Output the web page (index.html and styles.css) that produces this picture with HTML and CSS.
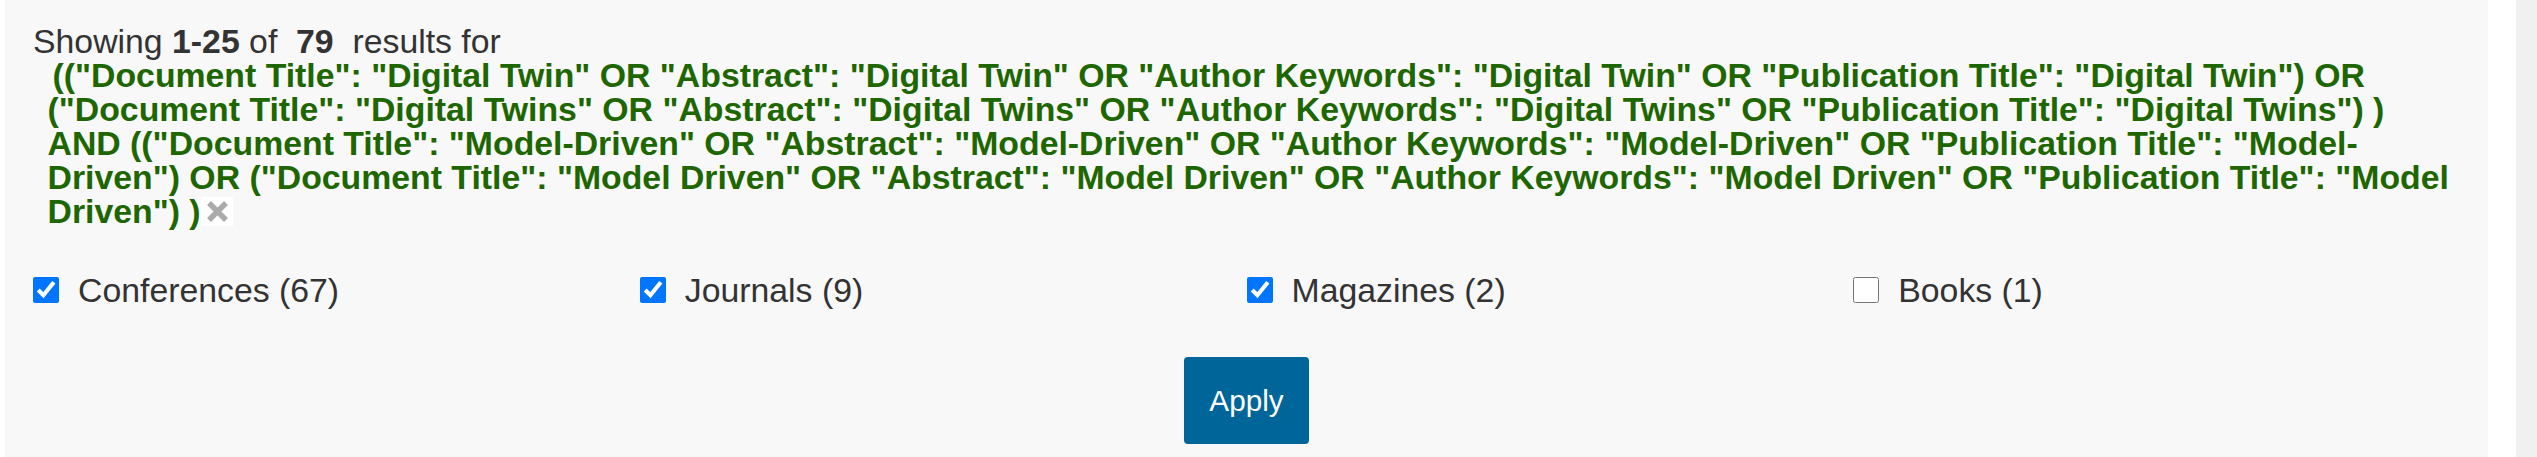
FILE: index.html
```html
<!DOCTYPE html>
<html lang="en">
<head>
<meta charset="utf-8">
<title>Search results</title>
<link rel="stylesheet" href="styles.css">
</head>
<body>
<div class="page">
  <div class="panel">
    <div class="summary">
      <div class="count">Showing <b>1-25</b> of&nbsp; <b>79</b>&nbsp; results for</div>
      <div class="query">
        <span class="q-line first">(("Document Title": "Digital Twin" OR "Abstract": "Digital Twin" OR "Author Keywords": "Digital Twin" OR "Publication Title": "Digital Twin") OR ("Document Title": "Digital Twins" OR "Abstract": "Digital Twins" OR "Author Keywords": "Digital Twins" OR "Publication Title": "Digital Twins") )</span>
        <span class="q-line">AND (("Document Title": "Model-Driven" OR "Abstract": "Model-Driven" OR "Author Keywords": "Model-Driven" OR "Publication Title": "Model-Driven") OR ("Document Title": "Model Driven" OR "Abstract": "Model Driven" OR "Author Keywords": "Model Driven" OR "Publication Title": "Model Driven") )<svg class="clear" viewBox="0 0 32 29" width="32" height="29" aria-label="Clear"><path d="M8 6 L25 23 M25 6 L8 23" stroke="#aaaaaa" stroke-width="5.5" fill="none"/></svg></span>
      </div>
    </div>
    <div class="filters">
      <label class="filter"><input type="checkbox" checked><span>Conferences (67)</span></label>
      <label class="filter"><input type="checkbox" checked><span>Journals (9)</span></label>
      <label class="filter"><input type="checkbox" checked><span>Magazines (2)</span></label>
      <label class="filter"><input type="checkbox"><span>Books (1)</span></label>
    </div>
    <div class="actions">
      <button class="apply" type="button">Apply</button>
    </div>
  </div>
  <div class="gutter"></div>
  <div class="track"></div>
</div>
</body>
</html>
```
FILE: styles.css
```css
html, body {
  margin: 0;
  padding: 0;
}

body {
  font-family: "Liberation Sans", Arial, sans-serif;
  background: #ffffff;
  color: #333333;
}

.page {
  display: flex;
  height: 457px;
  padding-left: 5px;
  overflow: hidden;
}

.panel {
  flex: 0 0 2483px;
  box-sizing: border-box;
  background: #f8f8f8;
  padding: 24px 28px 0;
}

.gutter {
  flex: 0 0 28px;
  background: #ffffff;
}

.track {
  flex: 0 0 21px;
  background: #f0f0f0;
}

.summary {
  font-size: 33.8px;
  line-height: 34px;
  color: #333333;
}

.count b {
  font-weight: bold;
}

.query {
  padding-left: 14.5px;
  color: #1e6600;
  font-weight: bold;
}

.q-line {
  display: block;
}

.q-line.first {
  text-indent: 5px;
}

.clear {
  display: inline-block;
  vertical-align: -3px;
  background: #ffffff;
}

.filters {
  display: grid;
  grid-template-columns: repeat(4, 1fr);
  margin-top: 45px;
  font-size: 33.8px;
  line-height: 34px;
  color: #333333;
}

.filter {
  display: flex;
  align-items: center;
  gap: 19px;
}

.filter input {
  width: 26px;
  height: 26px;
  margin: 0;
}

.actions {
  display: flex;
  justify-content: center;
  margin-top: 50px;
}

.apply {
  font-family: "Liberation Sans", Arial, sans-serif;
  font-size: 29.7px;
  color: #ffffff;
  background: #006699;
  border: none;
  border-radius: 4px;
  height: 87px;
  padding: 0 25px;
}
```
